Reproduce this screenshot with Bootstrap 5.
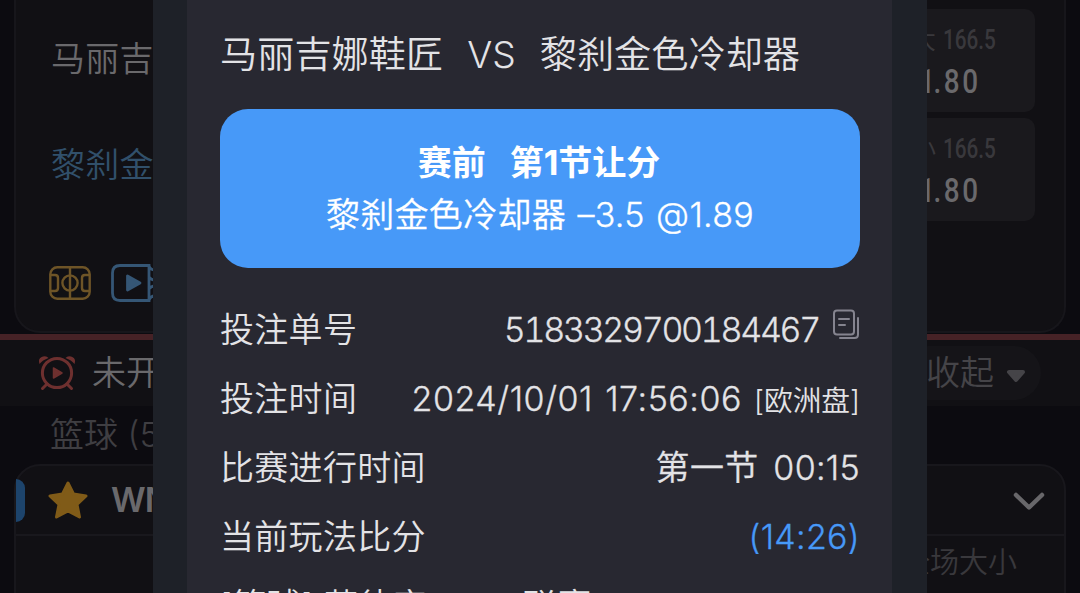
<!DOCTYPE html>
<html lang="zh-CN">
  <head>
    <meta charset="UTF-8" />
    <meta name="viewport" content="width=device-width, initial-scale=1.0" />
    <title>投注详情</title>
    <link
      href="https://cdn.jsdelivr.net/npm/bootstrap@5.3.0/dist/css/bootstrap.min.css"
      rel="stylesheet"
    />
    <style>
      body {
        width: 1080px;
        height: 593px;
        background-color: #0c0b10;
        color: #6a696c;
        font-family: Inter, "Noto Sans CJK SC", sans-serif;
        font-size: 34px;
        font-weight: 350;
        line-height: 48px;
      }
      svg {
        display: block;
        flex: none;
      }
      /* 背景:赛事列表 */
      .match-card {
        height: 333px;
        margin: 0 14px;
        padding: 9px 29px 0 35px;
        background-color: #111014;
        border: solid #17161b;
        border-width: 0 2px 2px;
        border-radius: 0 0 26px 26px;
      }
      .team-col {
        padding-top: 26px;
        letter-spacing: 0.3px;
      }
      .team-next {
        margin-top: 58px;
        color: #31506b;
      }
      .media-icons {
        margin-top: 75px;
        margin-left: -2px;
        gap: 20px;
      }
      .odds-box {
        width: 230px;
        height: 103px;
        padding: 10px 0 0 105px;
        border-radius: 10px;
        background-color: #1a191d;
      }
      .odds-list {
        gap: 6px;
      }
      .odds-line {
        height: 41px;
        line-height: 41px;
        font-size: 26px;
        color: #39383c;
      }
      .odds-line span,
      .odds-value {
        font-family: Roboto, sans-serif;
        transform-origin: left center;
      }
      .odds-line span {
        display: inline-block;
        font-size: 28px;
        font-weight: 500;
        transform: scaleX(0.74);
        margin-left: 7px;
      }
      .odds-value {
        height: 42px;
        margin-left: 9px;
        line-height: 42px;
        font-weight: 500;
        font-size: 34px;
        letter-spacing: 3px;
        transform: scaleX(0.82);
      }
      .odds-value span {
        letter-spacing: -1.5px;
      }
      .section-bar {
        height: 72px;
        margin-top: 1px;
        padding: 0 39px 0 38px;
        border-top: 6px solid #462226;
        background-color: #111014;
      }
      .fold-pill {
        height: 54px;
        width: 140px;
        padding-right: 13px;
        border-radius: 27px;
        background-color: #151418;
        color: #454448;
      }
      .sport-name {
        height: 58px;
        padding: 5px 0 0 50px;
        color: #3f3e42;
      }
      .league-card {
        height: 140px;
        margin: 0 14px;
        border: 2px solid #18171c;
        border-radius: 26px 26px 0 0;
        background-color: #111014;
      }
      .league-head {
        height: 70px;
        padding-right: 19px;
        border-bottom: 2px solid #19181d;
      }
      .league-tab {
        width: 9px;
        height: 43px;
        margin-right: 23px;
        border-radius: 0 10px 10px 0;
        background-color: #1d446c;
      }
      .league-name {
        margin-left: 23px;
        font-weight: 600;
        letter-spacing: -1px;
      }
      .league-sub {
        padding: 3px 47px 0 0;
        font-size: 29px;
        color: #39383c;
      }
      /* 注单弹窗 */
      .bet-frame {
        left: 153px;
        width: 774px;
        padding: 0 35px 0 34px;
        background-color: #1e2128;
      }
      .bet-panel {
        height: 593px;
        padding: 31px 32px 0 33px;
        background-color: #282831;
        color: #e3e3e6;
        letter-spacing: 0.3px;
        white-space: nowrap;
      }
      .bet-title {
        height: 78px;
        font-size: 37.2px;
        letter-spacing: 0;
      }
      .bet-pick {
        height: 159px;
        margin-bottom: 38px;
        padding-top: 30px;
        border-radius: 28px;
        background-color: #4799f8;
        color: #fff;
      }
      .pick-name {
        padding-right: 2px;
        letter-spacing: 0;
      }
      .pick-line {
        padding-top: 4px;
        word-spacing: 1.5px;
      }
      .bet-row {
        height: 69px;
      }
      .bet-no,
      .bet-time,
      .clock,
      .score,
      .pick-line {
        -webkit-text-stroke: 0.3px currentColor;
      }
      .bet-no {
        margin-right: 13px;
        font-variant-numeric: tabular-nums;
        letter-spacing: -2.3px;
      }
      .bet-time {
        margin-right: 2px;
        word-spacing: 2px;
        letter-spacing: 0.55px;
      }
      .clock {
        word-spacing: 5px;
      }
      .zone {
        font-size: 28.7px;
        letter-spacing: 0;
      }
      .score {
        color: #4799f8;
      }
      .bet-league {
        letter-spacing: 0.55px;
      }
    </style>
  </head>
  <body class="position-relative overflow-hidden">
    <div class="match-card d-flex justify-content-between">
      <div class="team-col">
        <div>马丽吉</div>
        <div class="team-next">黎刹金</div>
        <div class="media-icons d-flex align-items-center">
          <svg width="42" height="34" viewBox="0 0 42 34" fill="none" stroke="#6e5427" stroke-width="2.4">
            <rect x="1.3" y="1.3" width="39.4" height="31.4" rx="7" />
            <path d="M21 1V33M1 9H6Q9 9 9 12V22Q9 25 6 25H1M41 9H36Q33 9 33 12V22Q33 25 36 25H41" />
            <circle cx="21" cy="17" r="7.6" />
          </svg>
          <svg width="52" height="38" viewBox="0 0 52 38" fill="none" stroke="#355675" stroke-width="2.8">
            <path d="M38 1.5H9Q1.5 1.5 1.5 9V29Q1.5 36.5 9 36.5H38ZM38 1.5Q39 6 44 6M38 13Q40 16 44 16M38 25Q40 22 44 22M38 36.5Q39 32 44 32" />
            <path d="M16.5 12V26L29 19Z" fill="#355675" stroke-linejoin="round" />
          </svg>
        </div>
      </div>
      <div class="odds-list d-flex flex-column">
        <div class="odds-box">
          <div class="odds-line">大<span>166.5</span></div>
          <div class="odds-value"><span>1</span>.80</div>
        </div>
        <div class="odds-box">
          <div class="odds-line">小<span>166.5</span></div>
          <div class="odds-value"><span>1</span>.80</div>
        </div>
      </div>
    </div>

    <div class="section-bar d-flex align-items-center justify-content-between">
      <div class="d-flex align-items-center">
        <svg width="38" height="36" viewBox="0 0 38 36" fill="none" stroke="#6e302f" stroke-width="3">
          <circle cx="19" cy="18" r="14.6" />
          <path d="M9 29L4.500 33.500M29 29L33.500 33.500" stroke-linecap="round" />
          <path d="M1.500 9Q-.5 3 5 1.500Q8.500 .5 10.500 3Q4.500 5 1.500 9ZM36.500 9Q38.500 3 33 1.500Q29.500 .5 27.500 3Q33.500 5 36.500 9Z" fill="#6e302f" stroke="none" />
          <path d="M15.500 13V23L24 18Z" fill="#6e302f" stroke-width="1.500" stroke-linejoin="round" />
        </svg>
        <div class="ms-3">未开</div>
      </div>
      <div class="fold-pill d-flex align-items-center justify-content-end">
        收起
        <svg class="ms-2 mt-2" width="26" height="16" viewBox="0 0 26 16">
          <path d="M7 3H21L14 11Z" fill="#454448" stroke="#454448" stroke-width="4" stroke-linejoin="round" />
        </svg>
      </div>
    </div>

    <div class="sport-name">篮球 (5</div>

    <div class="league-card">
      <div class="league-head d-flex align-items-center">
        <div class="league-tab"></div>
        <svg width="40" height="38" viewBox="0 0 40 38">
          <path d="M20 2L25.500 13L38 15L29 23.500L31.500 36L20 30L8.500 36L11 23.500L2 15L14.500 13Z" fill="#805b18" stroke="#805b18" stroke-width="3" stroke-linejoin="round" />
        </svg>
        <div class="league-name">WN</div>
        <svg class="ms-auto" width="32" height="19" viewBox="0 0 32 19" fill="none" stroke="#68676a" stroke-width="4.500" stroke-linecap="round" stroke-linejoin="round">
          <path d="M3 4L16 16.500L29 4" />
        </svg>
      </div>
      <div class="league-sub text-end">全场大小</div>
    </div>

    <!-- 弹窗盖在列表上方 -->
    <div class="bet-frame position-absolute top-0">
      <div class="bet-panel overflow-hidden">
        <div class="bet-title d-flex">
          <span>马丽吉娜鞋匠</span>
          <span class="ms-4">VS</span>
          <span class="ms-4">黎刹金色冷却器</span>
        </div>
        <div class="bet-pick text-center">
          <div class="pick-name fw-bold d-flex justify-content-center"><span>赛前</span><span class="ms-4">第1节让分</span></div>
          <div class="pick-line">黎刹金色冷却器 –3.5 @1.89</div>
        </div>
        <div class="bet-row d-flex justify-content-between">
          <span>投注单号</span>
          <div class="d-flex">
            <span class="bet-no">5183329700184467</span>
            <svg width="28" height="34" viewBox="0 0 28 34" fill="none" stroke="#85848f" stroke-width="2" stroke-linecap="round">
              <rect x="2" y="4.500" width="20" height="24" rx="3" />
              <path d="M7 13H17M7 19H13M26 12V28.500Q26 32 22.500 32H8" />
            </svg>
          </div>
        </div>
        <div class="bet-row d-flex justify-content-between">
          <span>投注时间</span>
          <div><span class="bet-time">2024/10/01 17:56:06</span> <span class="zone">[欧洲盘]</span></div>
        </div>
        <div class="bet-row d-flex justify-content-between">
          <span>比赛进行时间</span>
          <span class="clock">第一节 00:15</span>
        </div>
        <div class="bet-row d-flex justify-content-between">
          <span>当前玩法比分</span>
          <span class="score">(14:26)</span>
        </div>
        <div class="bet-row bet-league">[篮球] 菲律宾MPBL联赛</div>
      </div>
    </div>

    <script src="https://cdn.jsdelivr.net/npm/bootstrap@5.3.0/dist/js/bootstrap.bundle.min.js"></script>
  </body>
</html>
